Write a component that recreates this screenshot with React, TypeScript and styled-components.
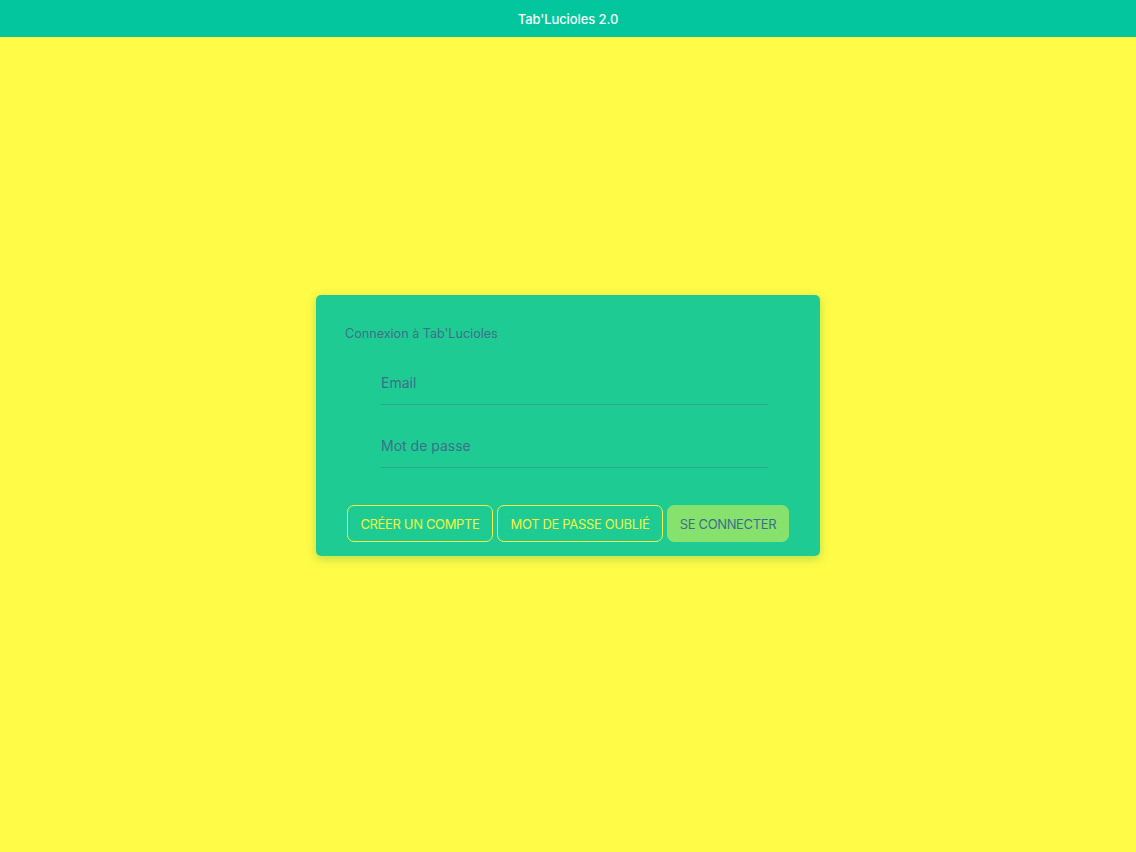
import React from 'react';
import styled, { createGlobalStyle } from 'styled-components';

const GlobalStyle = createGlobalStyle`
  html, body {
    margin: 0;
    padding: 0;
    height: 100%;
    background: #fffb47;
    font-family: Inter, "Noto Sans", sans-serif;
  }
  #root {
    min-height: 100vh;
  }
`

const Page = styled.div`
  min-height: 100vh;
  display: flex;
  flex-direction: column;
  background: #fffb47;
`

const Header = styled.header`
  height: 37px;
  background: #03c69e;
  display: flex;
  align-items: center;
  justify-content: center;
  color: #f4fffb;
  font-size: 13px;
  font-weight: 500;
  letter-spacing: -0.1px;
`

const Main = styled.main`
  flex: 1;
  display: flex;
  justify-content: center;
  padding-top: 258px;
`

const Card = styled.div`
  width: 504px;
  height: 261px;
  box-sizing: border-box;
  background: #1ecc93;
  border-radius: 5px;
  box-shadow: 0 3px 10px rgba(60, 170, 80, 0.35);
  padding: 30px 29px 0 29px;
  display: flex;
  flex-direction: column;
`

const Title = styled.div`
  color: #3e6f8a;
  font-size: 12.6px;
  line-height: 18px;
`

const Fields = styled.div`
  padding: 17px 23px 0 36px;
  display: flex;
  flex-direction: column;
  gap: 18px;
`

const Field = styled.div`
  height: 45px;
  box-sizing: border-box;
  border-bottom: 1px solid #2aa688;
  display: flex;
  align-items: flex-end;
  padding-bottom: 13px;
`

const Input = styled.input`
  width: 100%;
  border: none;
  background: transparent;
  font-family: inherit;
  font-size: 14px;
  line-height: 17px;
  color: #3e6f8a;
  padding: 0;
  outline: none;
  &::placeholder {
    color: #3e6f8a;
  }
`

const Actions = styled.div`
  display: flex;
  gap: 4px;
  margin-top: 37px;
  margin-left: 2px;
`

const ActionButton = styled.button<{ $filled?: boolean; $width: number }>`
  width: ${p => p.$width}px;
  height: 37px;
  box-sizing: border-box;
  padding: 0;
  border-radius: 7px;
  font-family: inherit;
  font-size: 13px;
  font-weight: 400;
  letter-spacing: -0.35px;
  white-space: nowrap;
  text-transform: uppercase;
  cursor: pointer;
  border: 1px solid ${p => (p.$filled ? '#86e26d' : '#f2f24a')};
  background: ${p => (p.$filled ? '#86e26d' : 'transparent')};
  color: ${p => (p.$filled ? '#3e6f8a' : '#f4f53f')};
`

export default function App() {
  return (
    <Page>
      <GlobalStyle />
      <Header>Tab'Lucioles 2.0</Header>
      <Main>
        <Card>
          <Title>Connexion à Tab'Lucioles</Title>
          <Fields>
            <Field>
              <Input type="email" placeholder="Email" />
            </Field>
            <Field>
              <Input type="password" placeholder="Mot de passe" />
            </Field>
          </Fields>
          <Actions>
            <ActionButton $width={146}>Créer un compte</ActionButton>
            <ActionButton $width={166}>Mot de passe oublié</ActionButton>
            <ActionButton $width={122} $filled>Se connecter</ActionButton>
          </Actions>
        </Card>
      </Main>
    </Page>
  );
}
